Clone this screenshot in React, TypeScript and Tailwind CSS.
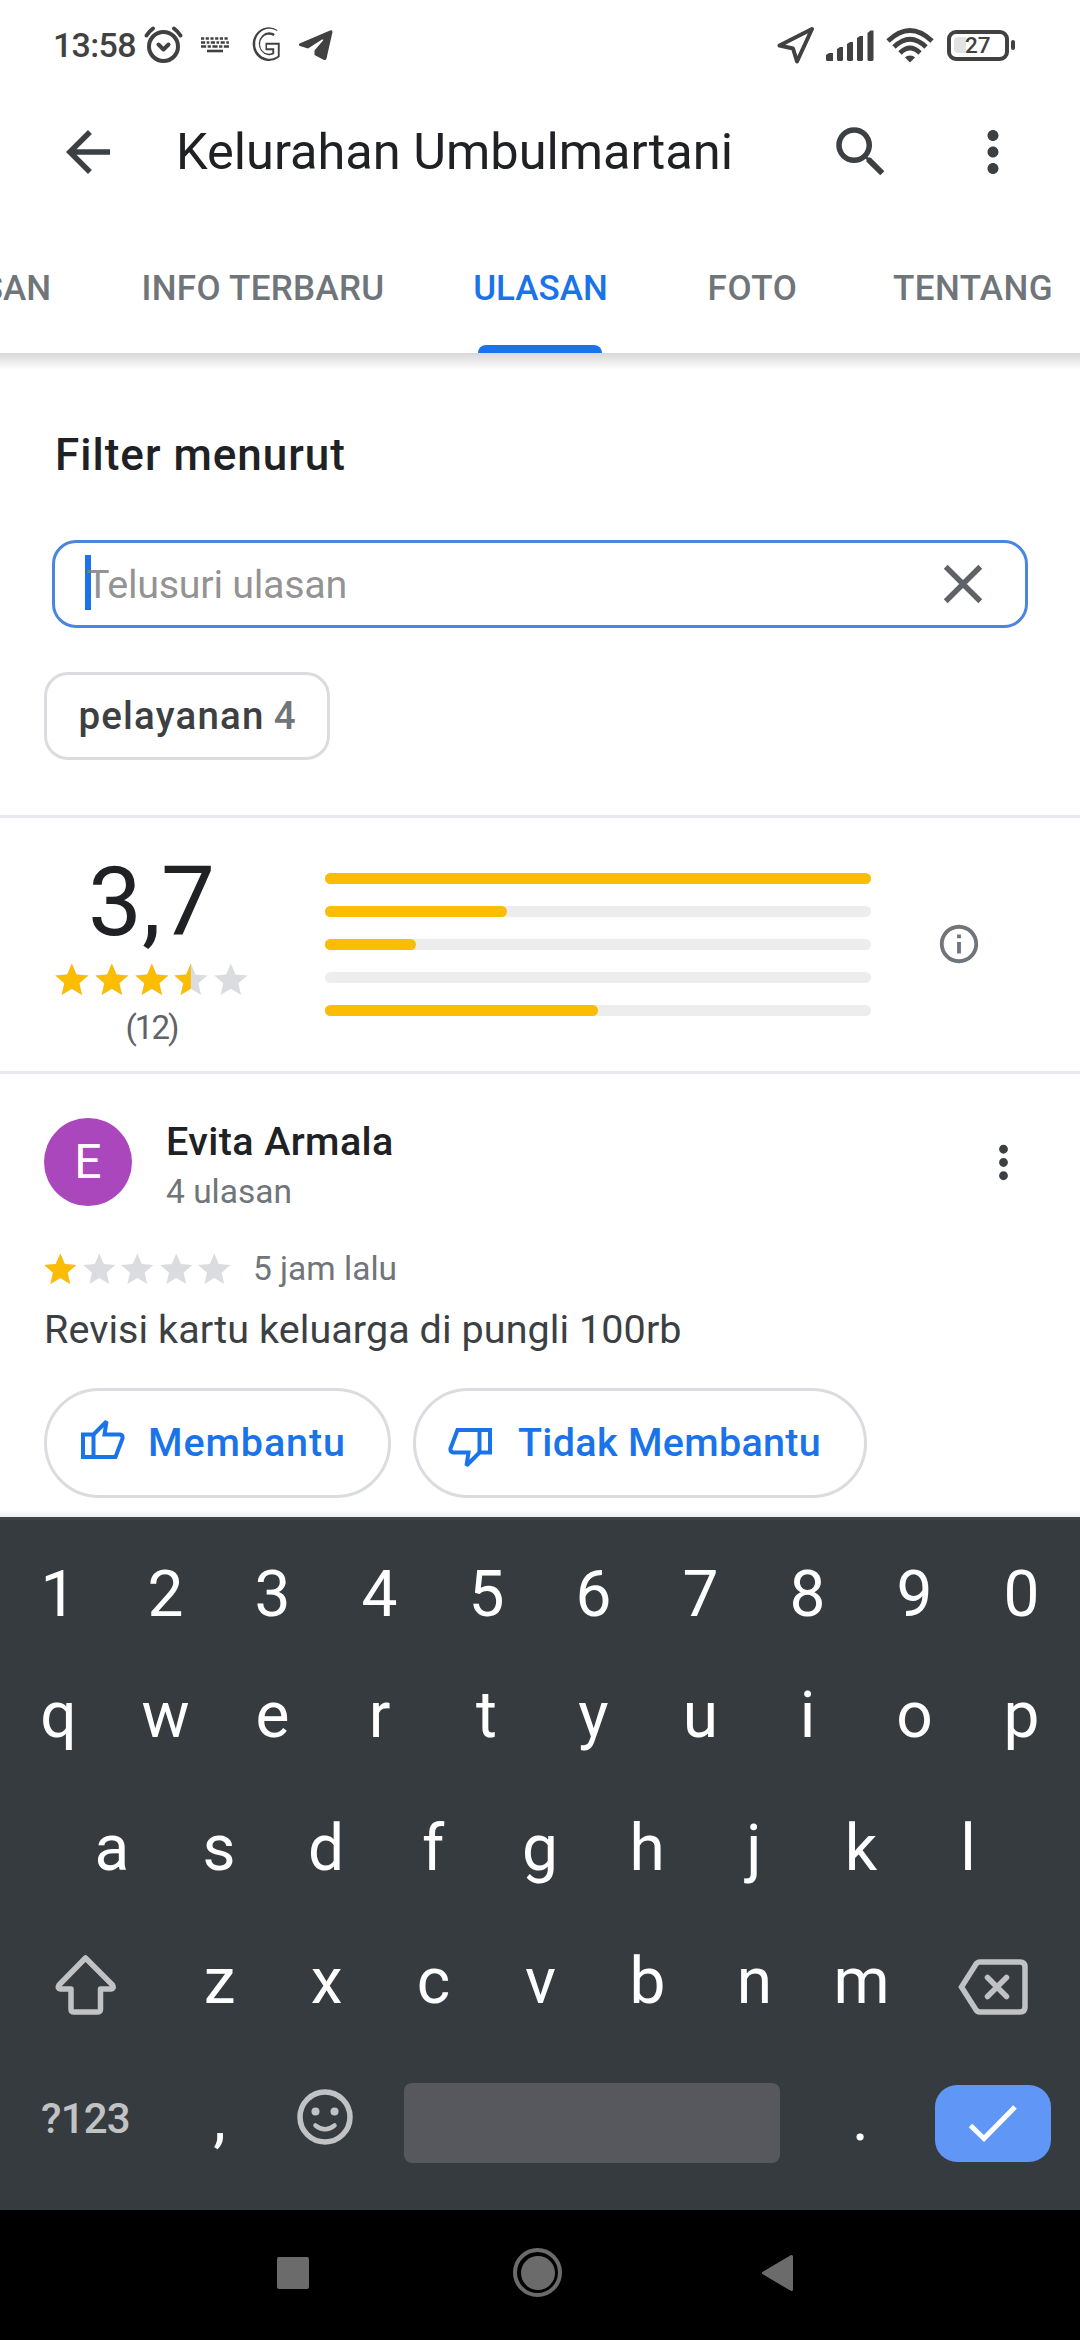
import { MdArrowBack, MdClose, MdInfoOutline, MdMoreVert, MdSearch } from "react-icons/md";

const STAR_PATH =
  "M12 17.27L18.18 21l-1.64-7.03L22 9.24l-7.19-.61L12 2 9.19 8.63 2 9.24l5.46 4.73L5.82 21z";

const TABS = [
  { label: "RINGKASAN", className: "w-[96px] justify-end pr-[45px]" },
  { label: "INFO TERBARU", className: "w-[334px] justify-center tracking-[0.3px]" },
  { label: "ULASAN", className: "w-[221px] justify-center", active: true },
  { label: "FOTO", className: "w-[203px] justify-center tracking-[0.6px]" },
  { label: "TENTANG", className: "w-[238px] justify-center tracking-[0.4px]" },
];

// share of the track that is filled, five stars first
const DISTRIBUTION = [100, 33.4, 16.7, 0, 50];

function StatusBar() {
  return (
    <div className="flex h-[90px] shrink-0 items-center justify-between pl-[53px] pr-[65px] text-[#414141]">
      <div className="flex items-center">
        <span className="w-[85px] whitespace-nowrap text-[34px] font-medium leading-[40px] tracking-[-0.7px]">13:58</span>
        <svg className="ml-[5px] h-[40px] w-[42px]" viewBox="0 0 42 40" fill="none" stroke="currentColor" strokeLinecap="round">
          <circle cx="20.5" cy="21.5" r="14.5" strokeWidth="4" />
          <path d="M3.5 10.5Q6 6.5 10 3.5M37.5 10.5Q35 6.5 31 3.5" strokeWidth="4" />
          <path d="M15.5 19.5l5 5 5-5" strokeWidth="4" strokeLinejoin="round" />
        </svg>
        <svg className="ml-[16px] h-[16px] w-[28px]" viewBox="0 0 28 16" fill="none" stroke="currentColor" strokeWidth="2.6">
          <path d="M0 1.5h28" strokeDasharray="3.2 1.5" />
          <path d="M0 5.5h28" strokeDasharray="4.2 1.5 2.6 1.5" />
          <path d="M0 9.5h28" strokeDasharray="5.2 1.5 3.2 1.5" />
          <path d="M6 14h16" />
        </svg>
        <svg className="ml-[21px] h-[36px] w-[32px]" viewBox="0 0 32 36" fill="none">
          <path d="M25.5 6A12.5 13.2 0 1 0 26 28V19.5H15.5" stroke="currentColor" strokeWidth="7.4" />
          <path d="M27.5 6.6A12.5 13.2 0 1 0 26 28V19.5H17" stroke="#fff" strokeWidth="3.6" />
        </svg>
        <svg className="ml-[16px] h-[32px] w-[36px]" viewBox="0 0 36 32" fill="currentColor">
          <path d="M1.5 14.5Q0 16 2 17L10 19.5 24 10.5Q26 10 25 11.5L16.5 21.5V26L26 31Q28 31.5 28.5 29.5L34.5 3Q34.5 .5 32 1.5Z" />
        </svg>
      </div>
      <div className="flex items-center">
        <svg className="h-[38px] w-[38px]" viewBox="0 0 38 38" fill="none" stroke="currentColor" strokeWidth="4" strokeLinejoin="round">
          <path d="M35 3L2.5 19.5 16 22.5 20 35.5Z" />
        </svg>
        <svg className="ml-[11px] h-[32px] w-[49px]" viewBox="0 0 49 32" fill="currentColor">
          <path d="M0 26l3-2h4v8H1l-1-1z" />
          <path d="M11 20l3-2h3v13l-1 1h-4l-1-1z" />
          <path d="M21 15l3-2h3v18l-1 1h-4l-1-1z" />
          <path d="M31 9l3-2h3v24l-1 1h-4l-1-1z" />
          <path d="M41.5 4l3-2.5h3V31l-1 1h-4l-1-1z" />
        </svg>
        <svg className="ml-[11px] h-[36px] w-[48px]" viewBox="0 0 48 36" fill="none" stroke="currentColor" strokeWidth="4.8">
          <path d="M2 14Q24-7 46 14M8 20Q24 4.5 40 20M14 26Q24 16 34 26" />
          <path d="M24 28.5q3.5 0 5 2l-5 5-5-5q1.500-2 5-2z" fill="currentColor" stroke="none" />
        </svg>
        <div className="ml-[13px] flex h-[31px] w-[62px] items-center rounded-[9px] border-4 border-[#414141] pl-[3px]">
          <div className="h-[16px] w-[12px] rounded-l-[4px] bg-[#e3e3e3]" />
          <span className="-ml-px text-[22.5px] font-medium leading-[22px]">27</span>
        </div>
        <div className="ml-[2px] h-[10px] w-[4px] rounded-[2px] bg-[#414141]" />
      </div>
    </div>
  );
}

function AppBar() {
  return (
    <header className="flex h-[124px] shrink-0 items-center text-[#3c4043]">
      <MdArrowBack className="ml-[55px] size-[66px]" />
      <h1 className="ml-[55px] w-[600px] whitespace-nowrap text-[50.5px] leading-[60px] text-[#202124]">
        Kelurahan Umbulmartani
      </h1>
      <MdSearch className="ml-[52px] size-[66px]" />
      <MdMoreVert className="ml-[66px] size-[66px]" />
    </header>
  );
}

function Tabs() {
  return (
    <nav className="relative flex h-[139px] shrink-0 overflow-hidden text-[35px] font-medium leading-[42px] text-[#70757a]">
      {TABS.map((tab) => (
        <div key={tab.label} className={`flex shrink-0 items-center whitespace-nowrap pt-[10px] ${tab.className}`}>
          <span className={tab.active ? "text-[#1a73e8]" : ""}>{tab.label}</span>
          {tab.active ? (
            <div className="absolute bottom-0 left-[478px] h-[8px] w-[124px] rounded-t-[8px] bg-[#1a73e8]" />
          ) : null}
        </div>
      ))}
    </nav>
  );
}

function Stars({ value, size }: { value: number; size: string }) {
  return (
    <div className="flex">
      {[0, 1, 2, 3, 4].map((i) => (
        <svg key={i} className={size} viewBox="0 0 24 24" overflow="visible">
          <path d={STAR_PATH} fill="#dadce0" />
          {value >= i + 1 ? <path d={STAR_PATH} fill="#fbbc04" /> : null}
          {value === i + 0.5 ? (
            <path d="M12 2v15.270L5.820 21l1.640-7.030L2 9.240l7.190-.610z" fill="#fbbc04" />
          ) : null}
        </svg>
      ))}
    </div>
  );
}

function Filters() {
  return (
    <section className="flex flex-col bg-linear-to-b from-[#d8d8d8] from-0% to-white to-[17px] pt-[72px]">
      <h2 className="ml-[55px] text-[44px] font-medium leading-[60px] tracking-[1px] text-[#202124]">Filter menurut</h2>
      <div className="relative ml-[52px] mt-[55px] flex h-[88px] w-[976px] items-center justify-between rounded-[24px] border-[3px] border-[#4a86e0] pl-[31px] pr-[29px]">
        <div className="absolute left-[30px] top-[12px] h-[55px] w-[6px] bg-[#1a73e8]" />
        <span className="relative pt-[2px] text-[39.5px] leading-[48px] tracking-[-0.3px] text-[#808080]/85">
          Telusuri ulasan
        </span>
        <MdClose className="size-[66px] text-[#5f6368]" />
      </div>
      <div className="ml-[44px] mt-[44px] flex h-[88px] w-[286px] items-center justify-center gap-[9px] rounded-[24px] border-[3px] border-[#dadce0] text-[38.5px] font-medium leading-[48px]">
        <span className="tracking-[1.2px] text-[#3c4043]">pelayanan</span>
        <span className="text-[#70757a]">4</span>
      </div>
    </section>
  );
}

function RatingSummary() {
  return (
    <section className="mt-[55px] flex h-[259px] shrink-0 border-y-[3px] border-[#e8eaed]">
      <div className="ml-[52px] flex w-[199px] flex-col items-center">
        <div className="mt-[28px] text-[96px] leading-[112px] text-[#202124]">3,7</div>
        <div className="mt-[2px]">
          <Stars value={3.5} size="h-[40px] w-[39.7px]" />
        </div>
        <div className="mt-[6px] text-[33px] leading-[44px] tracking-[-2px] text-[#5f6368]">(12)</div>
      </div>
      <div className="ml-[74px] mt-[55px] flex w-[546px] flex-col gap-[22px]">
        {DISTRIBUTION.map((share, i) => (
          <div key={i} className="h-[11px] rounded-full bg-[#ededed]">
            <div className="h-full rounded-full bg-[#fbbc04]" style={{ width: `${share}%` }} />
          </div>
        ))}
      </div>
      <MdInfoOutline className="ml-[65px] mt-[103px] size-[46px] text-[#70757a]" />
    </section>
  );
}

function ThumbIcon({ className }: { className?: string }) {
  return (
    <svg className={className} viewBox="0 0 44 41" fill="none" stroke="currentColor" strokeWidth="4">
      <path d="M2 15.5H12.5L25.5 2.5 23.5 15.5H39Q42 16 41.5 19.5L34.5 38H2Z" strokeLinejoin="miter" strokeMiterlimit="2" />
      <path d="M12.5 15.5V38" />
    </svg>
  );
}

function Review() {
  return (
    <article className="flex h-[443px] shrink-0 flex-col pl-[44px] pt-[43px]">
      <div className="flex">
        <div className="mt-px flex size-[88px] items-center justify-center rounded-full bg-[#aa47bc] text-[48px] leading-none text-white">
          E
        </div>
        <div className="ml-[34px] w-[811px]">
          <div className="text-[39.5px] font-medium leading-[50px] tracking-[0.4px] text-[#202124]">Evita Armala</div>
          <div className="text-[33.5px] leading-[50px] text-[#70757a]">4 ulasan</div>
        </div>
        <MdMoreVert className="mt-[19px] size-[53px] text-[#3c4043]" />
      </div>
      <div className="mt-[28px] flex h-[48px] items-center">
        <div className="-ml-[3px]">
          <Stars value={1} size="h-[39px] w-[38.6px]" />
        </div>
        <span className="ml-[19px] text-[33.5px] leading-[48px] text-[#70757a]">5 jam lalu</span>
      </div>
      <p className="mt-[12px] text-[39.5px] leading-[50px] tracking-[0.08px] text-[#3c4043]">
        Revisi kartu keluarga di pungli 100rb
      </p>
      <div className="mt-[33px] flex gap-[22px] text-[39.5px] font-medium leading-[48px] text-[#1a73e8]">
        <button type="button" className="flex h-[110px] w-[347px] items-center rounded-full border-[3px] border-[#dadce0] pl-[34px]">
          <ThumbIcon className="-mt-[8px] h-[41px] w-[44px]" />
          <span className="ml-[23px] tracking-[0.9px]">Membantu</span>
        </button>
        <button type="button" className="flex h-[110px] w-[454px] items-center rounded-full border-[3px] border-[#dadce0] pl-[32px]">
          <ThumbIcon className="mt-[8px] h-[41px] w-[44px] rotate-180" />
          <span className="ml-[26px] tracking-[0.3px]">Tidak Membantu</span>
        </button>
      </div>
      <div className="-ml-[44px] mt-auto h-[7px] shrink-0 bg-linear-to-b from-white to-[#eeeeee]" />
    </article>
  );
}

function KeyRow({ keys, className }: { keys: string; className: string }) {
  return (
    <div className={`flex items-center justify-center ${className}`}>
      {keys.split("").map((key) => (
        <span key={key} className="w-[107px] text-center">
          {key}
        </span>
      ))}
    </div>
  );
}

function Keyboard() {
  return (
    <div className="flex h-[693px] shrink-0 flex-col border-t-[3px] border-[#3b444b] bg-[#363b3f] pt-[21px] text-[64px] leading-[76px] text-white">
      <KeyRow keys="1234567890" className="h-[108px]" />
      <KeyRow keys="qwertyuiop" className="h-[133px]" />
      <KeyRow keys="asdfghjkl" className="h-[133px]" />
      <div className="flex h-[133px] items-center">
        <svg className="ml-[55px] mt-[5px] h-[62px] w-[61px] text-[#c1c2c4]" viewBox="0 0 61 62" fill="none" stroke="currentColor" strokeWidth="5.5" strokeLinejoin="round">
          <path d="M30.5 5L4 32Q2 35.5 5.5 36H16V56Q16 59 19 59H42Q45.5 59 45.5 56V36H56Q59.500 35.5 57.5 32Z" />
        </svg>
        <KeyRow keys="zxcvbnm" className="ml-[50px]" />
        <svg className="ml-[43px] mt-[10px] h-[56px] w-[70px] text-[#c1c2c4]" viewBox="0 0 70 56" fill="none" stroke="currentColor" strokeWidth="5.5" strokeLinecap="round">
          <path d="M22 3H62Q67 3 67 8V48Q67 53 62 53H22Q19 53 17.5 50L3.5 28 17.5 6Q19 3 22 3Z" />
          <path d="M29.5 18.5L48.5 37.5M48.5 18.5L29.5 37.5" />
        </svg>
      </div>
      <div className="flex h-[150px] items-center">
        <span className="ml-[41px] w-[125px] -translate-y-[4px] whitespace-nowrap text-[42px] font-medium leading-[50px] tracking-[-0.8px] text-[#c1c2c4]">
          ?123
        </span>
        <span className="w-[107px] -translate-y-[4px] text-center">,</span>
        <svg className="ml-[24px] size-[56px] -translate-y-[6px] text-[#c1c2c4]" viewBox="0 0 56 56" fill="none" stroke="currentColor" strokeWidth="5.5" strokeLinecap="round">
          <circle cx="28" cy="28" r="25" />
          <path d="M18.5 36.500Q28 44 37.5 36.5" strokeWidth="4.5" />
          <circle cx="18.5" cy="22.5" r="4" fill="currentColor" stroke="none" />
          <circle cx="37.5" cy="22.5" r="4" fill="currentColor" stroke="none" />
        </svg>
        <div className="ml-[51px] h-[80px] w-[376px] rounded-[8px] bg-[#56585d]" />
        <span className="ml-[27px] w-[107px] -translate-y-[4px] text-center">.</span>
        <div className="ml-[21px] flex h-[77px] w-[116px] items-center justify-center rounded-[22px] bg-[#6097f6]">
          <svg className="h-[37px] w-[48px]" viewBox="0 0 48 37" fill="none" stroke="currentColor" strokeWidth="5">
            <path d="M1.5 20.5L15 33.5 46 2" />
          </svg>
        </div>
      </div>
    </div>
  );
}

function NavigationBar() {
  return (
    <div className="flex h-[130px] shrink-0 items-center bg-black pb-[5px] text-[#6b6b6b]">
      <div className="ml-[277px] size-[32px] rounded-[2px] bg-[#6b6b6b]" />
      <div className="ml-[204px] flex size-[49px] items-center justify-center rounded-full border-4 border-[#6b6b6b]">
        <div className="size-[34px] shrink-0 rounded-full bg-[#6b6b6b]" />
      </div>
      <svg className="ml-[199px] h-[38px] w-[33px]" viewBox="0 0 33 38" fill="currentColor" stroke="currentColor" strokeWidth="3" strokeLinejoin="round">
        <path d="M2.5 19L30.5 2.5V35.5Z" />
      </svg>
    </div>
  );
}

export default function App() {
  return (
    <div className="flex h-[2340px] w-[1080px] flex-col overflow-hidden bg-white font-[Roboto,sans-serif]">
      <StatusBar />
      <AppBar />
      <Tabs />
      <Filters />
      <RatingSummary />
      <Review />
      <Keyboard />
      <NavigationBar />
    </div>
  );
}
